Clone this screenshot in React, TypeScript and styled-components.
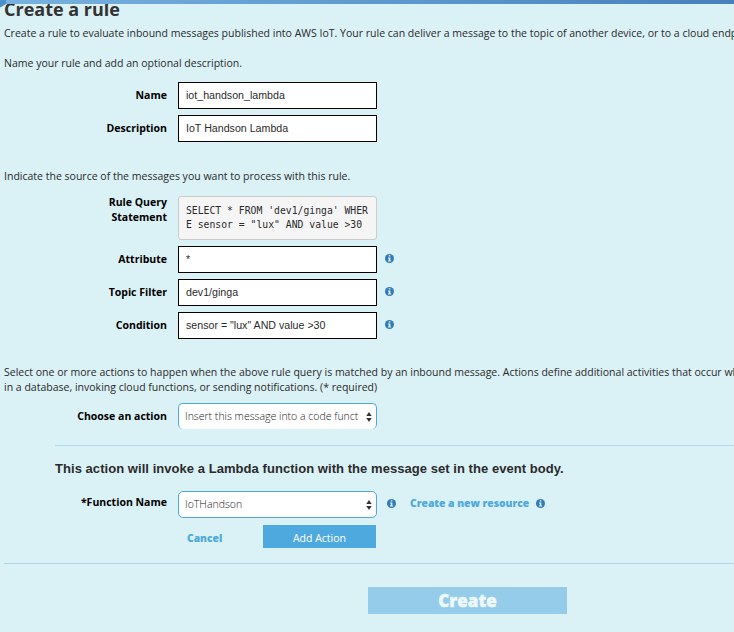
import React from "react";
import styled, { createGlobalStyle } from "styled-components";

const GlobalStyle = createGlobalStyle`
  * { box-sizing: border-box; }
  html, body { margin: 0; padding: 0; background: #daf1f5; overflow: hidden; }
`;

const Page = styled.main`
  position: relative;
  width: 734px;
  height: 632px;
  overflow: hidden;
  background: #daf1f5;
  color: #2b2b2b;
  font: 10.52px/15px "Open Sans", sans-serif;
`;

const TopBar = styled.div`
  position: absolute;
  top: 0;
  left: 0;
  width: 100%;
  height: 4px;
  background: linear-gradient(90deg, #78b2e0, #4681bd);
`;

const Corner = styled.svg`
  position: absolute;
  top: 0;
  left: 0;
`;

const Title = styled.h1`
  margin: 0 0 8px 4px;
  height: 18px;
  font-size: 18px;
  line-height: 18px;
  font-weight: 700;
  color: #333;
  white-space: nowrap;
`;

const Paragraph = styled.p<{ $gap: number }>`
  margin: 0 0 ${(p) => p.$gap}px 4px;
  white-space: nowrap;
`;

const Form = styled.div<{ $gap: number }>`
  display: flex;
  flex-direction: column;
  gap: 6px;
  margin-bottom: ${(p) => p.$gap}px;
`;

const Row = styled.div`
  display: grid;
  grid-template-columns: 167px 199px auto;
  column-gap: 11px;
`;

const Label = styled.label<{ $top?: number }>`
  margin-top: ${(p) => p.$top ?? 6}px;
  color: #000;
  font-weight: 700;
  text-align: right;
  white-space: pre-line;
`;

const Field = styled.div`
  height: 27px;
  padding: 0 7px;
  border: 1px solid #000;
  background: #fff;
  font: 10.65px/24px "Liberation Sans", sans-serif;
  white-space: nowrap;
`;

const Query = styled.pre`
  height: 44px;
  margin: 0;
  padding: 7px;
  border: 1px solid #ccc;
  border-radius: 3px;
  background: #f5f5f5;
  font: 9.75px/14px "DejaVu Sans Mono", monospace;
`;

const Select = styled.div<{ $openBottom?: boolean }>`
  display: flex;
  align-items: center;
  justify-content: space-between;
  height: ${(p) => (p.$openBottom ? 26 : 27)}px;
  padding: 0 4px 0 6px;
  border: 1px solid #4ea9de;
  border-bottom-width: ${(p) => (p.$openBottom ? 0 : 1)}px;
  border-radius: 5px;
  background: #fff;
  color: #222;
  font-weight: 300;
`;

const SelectText = styled.span`
  width: 174px;
  overflow: hidden;
  white-space: nowrap;
`;

const Aside = styled.div<{ $offset?: number }>`
  display: flex;
  align-items: center;
  height: 25px;
  margin-left: ${(p) => p.$offset ?? -3}px;
`;

const Link = styled.a`
  color: #4ea9de;
  font-size: 10.3px;
  font-weight: 800;
  white-space: nowrap;
`;

const ResourceLink = styled(Link)`
  width: 118px;
  margin: 0 8px 0 14px;
`;

const CancelLink = styled(Link)`
  padding-top: 3px;
`;

const Divider = styled.hr<{ $left: number }>`
  height: 1px;
  margin: 0 0 0 ${(p) => p.$left}px;
  border: 0;
  background: #a9d8ef;
`;

const Heading = styled.h2`
  margin: 15px 0 14px 55px;
  font: 700 13px/16px "Liberation Sans", sans-serif;
  letter-spacing: 0.05px;
  white-space: nowrap;
`;

const Actions = styled.div`
  display: grid;
  grid-template-columns: 76px 113px;
  align-items: center;
  height: 23px;
  margin: 7px 0 15px 187px;
`;

const AddButton = styled.button`
  height: 23px;
  padding: 3px 0 0;
  border: 0;
  background: #4ea9de;
  color: #fff;
  font: 10.52px/15px "Open Sans", sans-serif;
`;

const CreateButton = styled.button`
  display: block;
  width: 199px;
  height: 27px;
  margin: 23px 0 0 368px;
  padding: 0;
  border: 0;
  background: #94cce9;
  color: #edf8fc;
  font: 800 17px/27px "Open Sans", sans-serif;
  -webkit-text-stroke: 0.5px #edf8fc;
`;

const Arrows = () => (
  <svg width="6" height="10" viewBox="0 0 6 10" fill="#333">
    <path d="M3 0 5.7 4H.3ZM3 10 .3 6h5.4Z" />
  </svg>
);

const Info = () => (
  <svg width="9" height="9" viewBox="0 0 9 9">
    <circle cx="4.5" cy="4.5" r="4.5" fill="#337ab7" />
    <path d="M3.7 1.2h1.7v1.4H3.7ZM3 3.4h2.4v3h.7v1.1H3V6.4h.7V4.5H3Z" fill="#daf1f5" />
  </svg>
);

export default function App() {
  return (
    <Page>
      <GlobalStyle />
      <Title>Create a rule</Title>
      <TopBar />
      <Corner width="6" height="8" viewBox="0 0 6 8">
        <path d="M0 0H6V4Q4 5 2 6.5L0 7.5Z" fill="#4c8fcf" />
      </Corner>
      <Paragraph $gap={15}>
        Create a rule to evaluate inbound messages published into AWS IoT. Your rule can deliver a
        message to the topic of another device, or to a cloud endpoint
      </Paragraph>
      <Paragraph $gap={11}>Name your rule and add an optional description.</Paragraph>
      <Form $gap={27}>
        <Row>
          <Label>Name</Label>
          <Field>iot_handson_lambda</Field>
        </Row>
        <Row>
          <Label>Description</Label>
          <Field>IoT Handson Lambda</Field>
        </Row>
      </Form>
      <Paragraph $gap={12}>
        Indicate the source of the messages you want to process with this rule.
      </Paragraph>
      <Form $gap={26}>
        <Row>
          <Label $top={-1}>{"Rule Query\nStatement"}</Label>
          <Query>{"SELECT * FROM 'dev1/ginga' WHER\nE sensor = \"lux\" AND value >30"}</Query>
        </Row>
        <Row>
          <Label>Attribute</Label>
          <Field>*</Field>
          <Aside><Info /></Aside>
        </Row>
        <Row>
          <Label>Topic Filter</Label>
          <Field>dev1/ginga</Field>
          <Aside><Info /></Aside>
        </Row>
        <Row>
          <Label>Condition</Label>
          <Field>sensor = "lux" AND value &gt;30</Field>
          <Aside><Info /></Aside>
        </Row>
      </Form>
      <Paragraph $gap={8}>
        Select one or more actions to happen when the above rule query is matched by an inbound
        message. Actions define additional activities that occur when
        <br />
        in a database, invoking cloud functions, or sending notifications. (* required)
      </Paragraph>
      <Form $gap={16}>
        <Row>
          <Label>Choose an action</Label>
          <Select $openBottom>
            <SelectText>Insert this message into a code function</SelectText>
            <Arrows />
          </Select>
        </Row>
      </Form>
      <Divider $left={55} />
      <Heading>This action will invoke a Lambda function with the message set in the event body.</Heading>
      <Row>
        <Label $top={4}>*Function Name</Label>
        <Select>
          <SelectText>IoTHandson</SelectText>
          <Arrows />
        </Select>
        <Aside $offset={-1}>
          <Info />
          <ResourceLink>Create a new resource</ResourceLink>
          <Info />
        </Aside>
      </Row>
      <Actions>
        <CancelLink>Cancel</CancelLink>
        <AddButton>Add Action</AddButton>
      </Actions>
      <Divider $left={4} />
      <CreateButton>Create</CreateButton>
    </Page>
  );
}
